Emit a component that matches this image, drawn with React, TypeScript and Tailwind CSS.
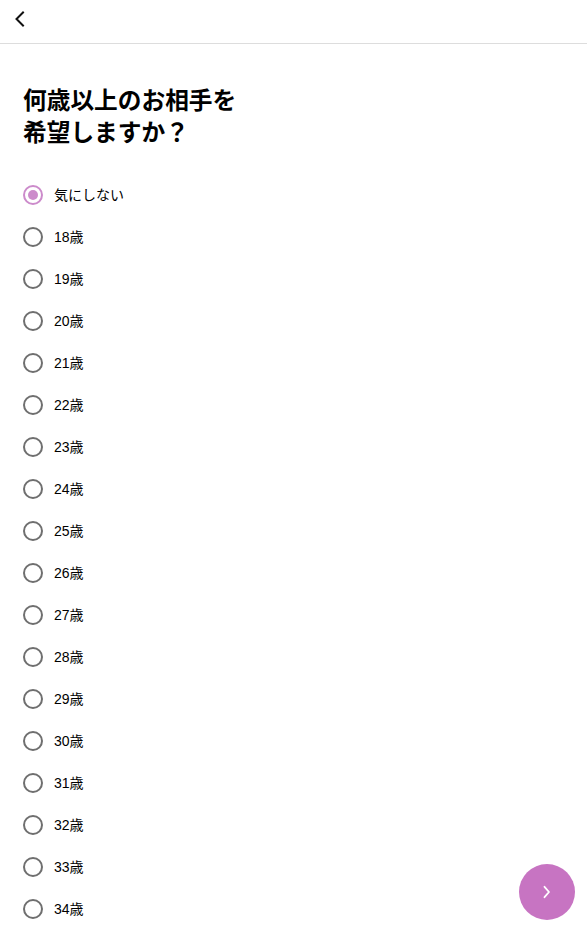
import { useState } from 'react';

const options = ['気にしない', ...Array.from({ length: 17 }, (_, i) => `${18 + i}歳`)];

export default function App() {
  const [selected, setSelected] = useState('気にしない');

  return (
    <div
      className="relative min-h-screen bg-white text-black"
      style={{ fontFamily: '"Liberation Sans", "Noto Sans CJK JP", sans-serif' }}
    >
      {/* Header */}
      <header className="h-[44px] border-b border-[#dddddd] flex items-start pt-[9px] px-[10px]">
        <button className="w-[20px] h-[20px] flex items-center justify-center">
          <svg width="20" height="20" viewBox="0 0 20 20" fill="none">
            <path d="M13 3.5 6.5 10 13 16.5" stroke="#111" strokeWidth="2" strokeLinecap="square" />
          </svg>
        </button>
      </header>

      <main className="px-[23px] pt-[41px]">
        <h1 className="text-[23.7px] leading-[32px] font-bold">
          何歳以上のお相手を
          <br />
          希望しますか？
        </h1>

        <ul className="mt-[25px] flex flex-col">
          {options.map((opt) => {
            const active = opt === selected;
            return (
              <li key={opt}>
                <label
                  className="h-[42px] flex items-center gap-[11px] cursor-pointer"
                  onClick={() => setSelected(opt)}
                >
                  <span
                    className={`w-[20px] h-[20px] rounded-full border-2 flex items-center justify-center ${
                      active ? 'border-[#cc8bcb]' : 'border-[#6f6f6f]'
                    }`}
                  >
                    {active && <span className="w-[10px] h-[10px] rounded-full bg-[#cc8bcb]" />}
                  </span>
                  <span className="text-[14px]">{opt}</span>
                </label>
              </li>
            );
          })}
        </ul>
      </main>

      <button className="absolute left-[519px] top-[864px] w-[56px] h-[56px] rounded-full bg-[#c774c2] flex items-center justify-center">
        <svg width="14" height="14" viewBox="0 0 14 14" fill="none">
          <path d="M4.5 1.8 9 7 4.5 12.2" stroke="#fff" strokeWidth="1.8" strokeLinecap="round" strokeLinejoin="round" />
        </svg>
      </button>
    </div>
  );
}
